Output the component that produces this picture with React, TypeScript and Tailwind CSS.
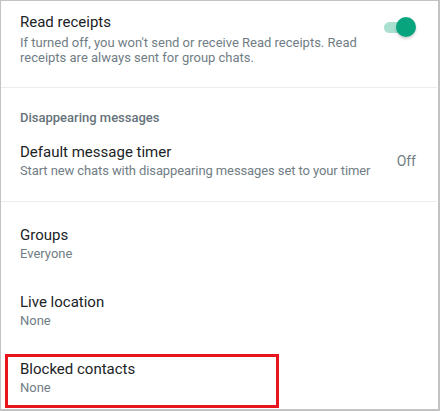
export default function App() {
  return (
    <div
      className="h-[411px] w-[440px] overflow-hidden border-t border-l border-r-2 border-b-2 border-[#c3c3c3] bg-white text-[#202326]"
      style={{ fontFamily: "Roboto, 'Liberation Sans', sans-serif" }}
    >
      {/* read receipts */}
      <div className="flex h-[86px] items-start justify-between pl-[19px] pr-[22px] pt-[11px]">
        <div className="flex flex-col">
          <div className="text-[15px] leading-[20px]">Read receipts</div>
          <div className="mt-[3px] text-[13px] leading-[15px] text-[#717d85]">
            If turned off, you won't send or receive Read receipts. Read
            <br />
            receipts are always sent for group chats.
          </div>
        </div>
        <div className="relative mt-[5px] h-[20px] w-[32px]">
          <div className="absolute left-0 top-[5px] h-[11px] w-[26px] rounded-full bg-[#a9e0d0]" />
          <div className="absolute right-0 top-0 h-[20px] w-[20px] rounded-full bg-[#07a47e] shadow-[0_2px_3px_rgba(0,0,0,0.18)]" />
        </div>
      </div>
      <div className="mr-[1px] h-px bg-[#ececec]" />

      {/* disappearing messages */}
      <div className="flex h-[113px] flex-col pl-[19px] pr-[22px] pt-[21px]">
        <div className="text-[13px] font-medium leading-[18px] text-[#66727a]">Disappearing messages</div>
        <div className="mt-[15px] flex items-center justify-between">
          <div className="flex flex-col">
            <div className="text-[15px] leading-[20px]">Default message timer</div>
            <div className="text-[13px] leading-[18px] tracking-[-0.1px] text-[#717d85]">
              Start new chats with disappearing messages set to your timer
            </div>
          </div>
          <div className="text-[14px] text-[#717d85]">Off</div>
        </div>
      </div>
      <div className="mr-[1px] h-px bg-[#ececec]" />

      {/* privacy items */}
      <div className="flex flex-col gap-[29px] pl-[19px] pt-[23px]">
        <Item title="Groups" sub="Everyone" />
        <Item title="Live location" sub="None" />
        <div className="relative">
          <Item title="Blocked contacts" sub="None" />
          <div className="absolute left-[-15px] top-[-5px] h-[54px] w-[274px] border-[3px] border-[#e8151f]" />
        </div>
      </div>
    </div>
  );
}

function Item({ title, sub }: { title: string; sub: string }) {
  return (
    <div className="flex flex-col">
      <div className="text-[15px] leading-[20px]">{title}</div>
      <div className="text-[13px] leading-[18px] text-[#717d85]">{sub}</div>
    </div>
  );
}
